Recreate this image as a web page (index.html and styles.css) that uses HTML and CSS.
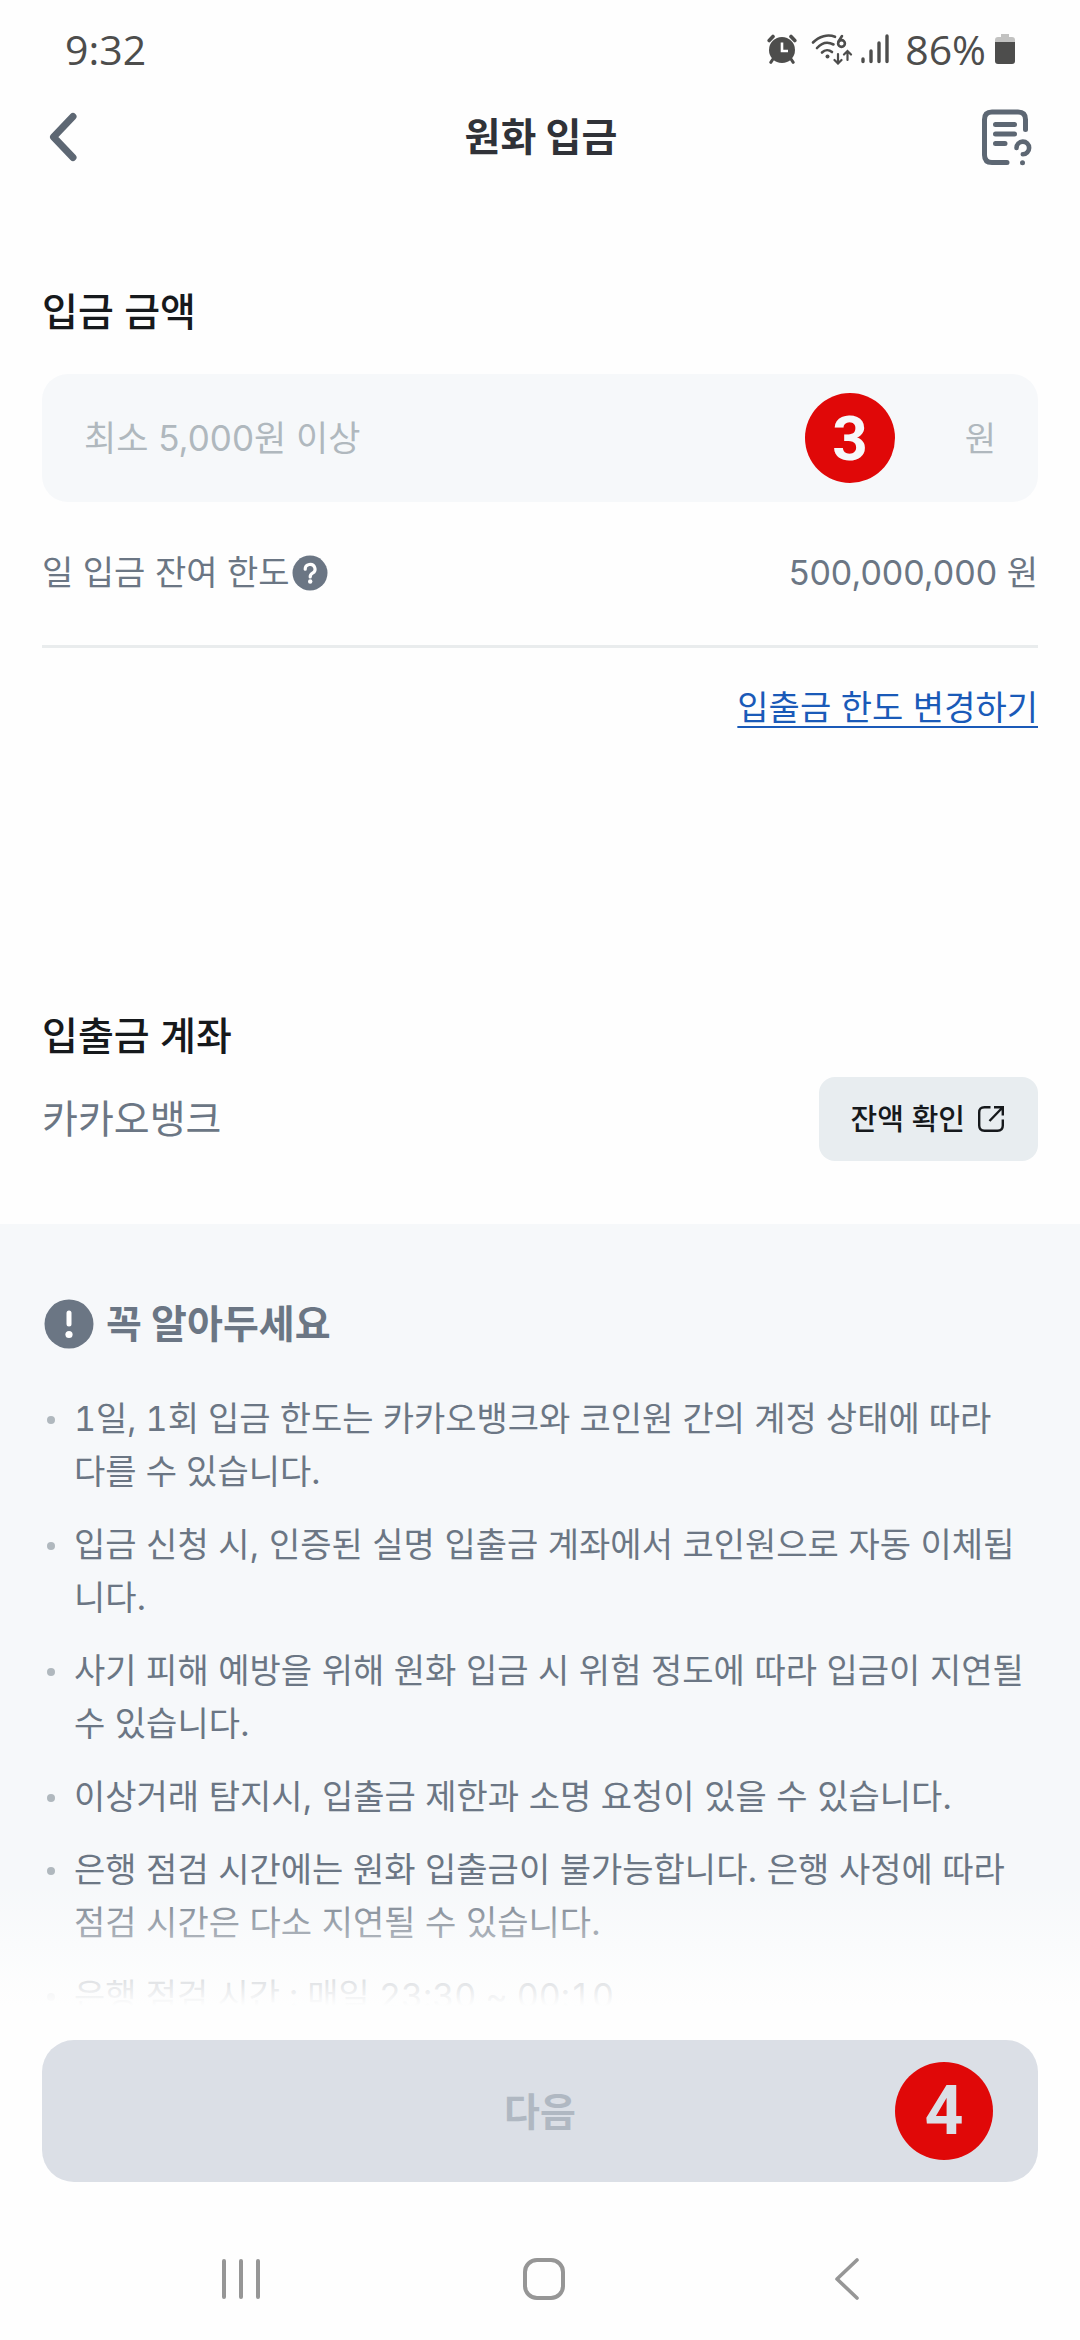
FILE: index.html
```html
<!DOCTYPE html>
<html lang="ko">
<head>
<meta charset="utf-8">
<meta name="viewport" content="width=device-width, initial-scale=1">
<title>원화 입금</title>
<link rel="stylesheet" href="styles.css">
</head>
<body class="app">
  <div class="status-bar">
    <span class="status-text">9:32</span>
    <div class="status-icons">
      <svg class="icon-alarm" width="30" height="30" viewBox="0 0 30 30" aria-hidden="true">
        <g stroke="#4d4d4c" stroke-linecap="round" fill="none">
          <path d="M2.200 6.500L6 2.500M27.800 6.500L24 2.500" stroke-width="3.600"/>
          <path d="M6 25L3.800 28.300M24 25L26.200 28.300" stroke-width="3"/>
        </g>
        <circle cx="15" cy="16" r="13" fill="#4d4d4c"/>
        <path d="M15 8.500V17H21" fill="none" stroke="#fff" stroke-width="2.600"/>
      </svg>
      <svg class="icon-wifi" width="42" height="32" viewBox="0 0 42 32" fill="none" stroke="#4d4d4c" stroke-width="2.600" stroke-linecap="round" aria-hidden="true">
        <path d="M2 9.500C8 3 17 1 24 3.800M6 15C11 9.500 17 8.500 22.500 11.500M11 19.500C14 16.500 18 16.500 21 19"/>
        <circle cx="16.500" cy="23.500" r="2" fill="#4d4d4c" stroke="none"/>
        <path d="M31 3L27.500 8.500"/>
        <circle cx="30.500" cy="10.500" r="3.400"/>
        <path d="M27 21V30M23.500 27L27 30.500L30.500 27M36.500 27V18.500M33 21.500L36.500 18L40 21.500" stroke-width="2.200"/>
      </svg>
      <svg class="icon-signal" width="28" height="30" viewBox="0 0 28 30" stroke="#4d4d4c" stroke-width="3.400" stroke-linecap="round" aria-hidden="true">
        <path d="M2 25V27.500M10 17V27.500M18 9V27.500M26 2V27.500"/>
      </svg>
      <span class="status-text">86%</span>
      <svg class="icon-battery" width="22" height="32" viewBox="0 0 22 32" aria-hidden="true">
        <path d="M7 1H15V4H18Q21 4 21 7V9H1V7Q1 4 4 4H7Z" fill="#c2c2c1"/>
        <path d="M1 9H21V28Q21 31 18 31H4Q1 31 1 28Z" fill="#4d4d4c"/>
      </svg>
    </div>
  </div>

  <header class="header">
    <button class="icon-button" type="button" aria-label="뒤로">
      <svg width="30" height="50" viewBox="0 0 30 50" fill="none" stroke="#5d6773" stroke-width="7" stroke-linecap="round" stroke-linejoin="round"><path d="M24 4.500L4.500 25L24 45.500"/></svg>
    </button>
    <h1 class="header-title">원화 입금</h1>
    <button class="icon-button" type="button" aria-label="입금 안내">
      <svg width="52" height="58" viewBox="0 0 52 58" fill="none" stroke="#5d6773" stroke-width="5" stroke-linecap="round" stroke-linejoin="round">
        <path d="M26 54.500H11Q3.500 54.500 3.500 47V11.500Q3.500 4 11 4H37Q44.500 4 44.500 11.500V21.500M14.500 16.500H33.500M14.500 26H33.500M14.500 35.500H24"/>
        <path d="M35.500 40A6.300 6.300 0 1 1 41.800 46.200" stroke-width="4.600"/>
        <circle cx="41.500" cy="54.700" r="2.500" fill="#5d6773" stroke="none"/>
      </svg>
    </button>
  </header>

  <div class="content">
    <main class="scroller">
      <section class="deposit">
        <h2 class="section-title"><label for="amount">입금 금액</label></h2>
        <div class="amount-field">
          <input class="amount-input" id="amount" type="text" inputmode="numeric" placeholder="최소 5,000원 이상">
          <span class="amount-unit">원</span>
          <span class="badge badge-amount">3</span>
        </div>
        <div class="limit-row">
          <span class="limit-label">일 입금 잔여 한도
            <button class="help-button" type="button" aria-label="한도 도움말">
              <svg width="36" height="36" viewBox="0 0 36 36"><circle cx="18" cy="18" r="17.500" fill="#6b7684"/><path d="M13.200 14.200A4.900 4.700 0 1 1 20.500 18.200Q18.200 19.500 18.200 22" fill="none" stroke="#fff" stroke-width="3.200" stroke-linecap="round"/><circle cx="18.200" cy="26.500" r="2.200" fill="#fff"/></svg>
            </button>
          </span>
          <span>500,000,000 원</span>
        </div>
        <a class="limit-link" href="#limit">입출금 한도 변경하기</a>
      </section>

      <section class="account">
        <h2 class="section-title">입출금 계좌</h2>
        <div class="account-row">
          <span class="bank-name">카카오뱅크</span>
          <button class="balance-button" type="button">잔액 확인
            <svg width="28" height="28" viewBox="0 0 28 28" fill="none" stroke="#16191c" stroke-width="2.400"><path d="M13.500 2.200H7.500Q2.200 2.200 2.200 7.500V20.500Q2.200 25.800 7.500 25.800H20.500Q25.800 25.800 25.800 20.500V14.500M17 2.200H25.800V10.500M25.500 2.500L12.500 16"/></svg>
          </button>
        </div>
      </section>

      <section class="notice">
        <h2 class="notice-title">
          <svg width="50" height="50" viewBox="0 0 50 50" aria-hidden="true"><circle cx="25" cy="25" r="24.500" fill="#6b7684"/><path d="M25 14V25" stroke="#fff" stroke-width="5" stroke-linecap="round"/><circle cx="25" cy="35.500" r="3.600" fill="#fff"/></svg>
          꼭 알아두세요
        </h2>
        <ul class="notice-list">
          <li class="tabular">1일, 1회 입금 한도는 카카오뱅크와 코인원 간의 계정 상태에 따라<br>다를 수 있습니다.</li>
          <li>입금 신청 시, 인증된 실명 입출금 계좌에서 코인원으로 자동 이체됩니다.</li>
          <li>사기 피해 예방을 위해 원화 입금 시 위험 정도에 따라 입금이 지연될 수 있습니다.</li>
          <li>이상거래 탐지시, 입출금 제한과 소명 요청이 있을 수 있습니다.</li>
          <li>은행 점검 시간에는 원화 입출금이 불가능합니다. 은행 사정에 따라 점검 시간은 다소 지연될 수 있습니다.</li>
          <li class="tabular">은행 점검 시간 : 매일 23:30 ~ 00:10</li>
        </ul>
      </section>
    </main>
    <div class="fade"></div>
  </div>

  <footer class="footer">
    <div class="next">
      <button class="next-button" type="button" disabled>다음</button>
      <span class="badge badge-next">4</span>
    </div>
    <nav class="system-nav">
      <button class="icon-button" type="button" aria-label="최근 앱"><svg width="40" height="42" viewBox="0 0 40 42" stroke="#969696" stroke-width="4" stroke-linecap="round"><path d="M3 3V39M20 3V39M37 3V39"/></svg></button>
      <button class="icon-button" type="button" aria-label="홈"><svg width="42" height="42" viewBox="0 0 42 42" fill="none" stroke="#969696" stroke-width="4"><rect x="2" y="2" width="38" height="38" rx="12"/></svg></button>
      <button class="icon-button" type="button" aria-label="뒤로 가기"><svg width="26" height="44" viewBox="0 0 26 44" fill="none" stroke="#969696" stroke-width="3.600" stroke-linecap="round" stroke-linejoin="round"><path d="M23 3L3 22L23 41"/></svg></button>
    </nav>
  </footer>
</body>
</html>
```
FILE: styles.css
```css
* {
  box-sizing: border-box;
}

.app {
  margin: 0;
  height: 100vh;
  display: flex;
  flex-direction: column;
  background: #fefefe;
  color: #6b7684;
  font-family: Inter, "Noto Sans CJK KR", sans-serif;
  font-size: 34px;
  line-height: 53px;
}

svg {
  display: block;
  flex: none;
}

button,
input {
  font: inherit;
  color: inherit;
  border: 0;
  padding: 0;
  background: none;
}

.status-bar {
  display: flex;
  align-items: center;
  justify-content: space-between;
  height: 98px;
  padding: 0 64px 0 65px;
  flex: none;
}

.status-text {
  font-family: "Open Sans", sans-serif;
  font-size: 41px;
  color: #4d4d4c;
}

.status-icons {
  display: flex;
  align-items: center;
}

.icon-wifi {
  margin-left: 14px;
}

.icon-signal {
  margin: 0 16px 0 8px;
}

.icon-battery {
  margin-left: 8px;
}

.header {
  display: grid;
  grid-template-columns: 1fr auto 1fr;
  align-items: center;
  height: 78px;
  padding: 0 47px 0 49px;
  flex: none;
}

.icon-button {
  display: flex;
  align-items: center;
  justify-content: center;
  justify-self: start;
}

.header .icon-button:last-child {
  justify-self: end;
}

.header-title,
.section-title,
.notice-title {
  margin: 0;
  font-size: 39px;
  line-height: 56px;
  font-weight: 700;
}

.header-title {
  color: #303238;
}

.content {
  position: relative;
  flex: 1;
  min-height: 0;
}

.scroller {
  height: 100%;
  overflow-y: auto;
  scrollbar-width: none;
}

.fade {
  position: absolute;
  left: 0;
  right: 0;
  bottom: 0;
  height: 124px;
  background: linear-gradient(rgba(254, 254, 254, 0), #fefefe);
  pointer-events: none;
}

.deposit {
  display: flex;
  flex-direction: column;
  padding: 108px 42px 0;
}

.section-title {
  font-weight: 500;
  color: #16191c;
}

.amount-field {
  position: relative;
  display: flex;
  align-items: center;
  height: 128px;
  margin-top: 34px;
  padding: 0 42px;
  border-radius: 26px;
  background: #f6f8fa;
}

.amount-input {
  flex: 1;
  min-width: 0;
  outline: 0;
  font-size: 35px;
}

.amount-input::placeholder,
.amount-unit {
  color: #b0b8be;
  opacity: 1;
}

.badge {
  position: absolute;
  top: 50%;
  transform: translateY(-50%);
  display: flex;
  align-items: center;
  justify-content: center;
  border-radius: 50%;
  background: #e00808;
  font-family: Roboto, sans-serif;
  font-weight: 700;
}

.badge-amount {
  right: 143px;
  width: 90px;
  height: 90px;
  font-size: 62px;
  color: #f6f8fa;
}

.badge-next {
  right: 45px;
  width: 98px;
  height: 98px;
  font-size: 68px;
  color: #dbdfe6;
}

.limit-row {
  display: flex;
  justify-content: space-between;
  margin-top: 44px;
  padding-bottom: 46px;
  border-bottom: 3px solid #e9eced;
}

.limit-label {
  display: flex;
  align-items: center;
  gap: 2px;
}

.limit-link {
  align-self: flex-end;
  margin-top: 33px;
  color: #1a5ab8;
  text-decoration-thickness: 2px;
  text-underline-offset: 6px;
}

.account {
  padding: 274px 42px 63px;
}

.account-row {
  display: flex;
  align-items: center;
  justify-content: space-between;
  margin-top: 13px;
}

.bank-name {
  font-size: 39px;
  line-height: 56px;
}

.balance-button {
  display: flex;
  align-items: center;
  gap: 12px;
  height: 84px;
  padding: 0 33px 0 32px;
  border-radius: 16px;
  background: #e8edf0;
  color: #16191c;
  font-size: 29px;
  font-weight: 500;
}

.notice {
  padding: 72px 42px 40px;
  background: #f6f8fa;
}

.notice-title {
  display: flex;
  align-items: center;
  gap: 12px;
  padding-left: 2px;
}

.notice-list {
  display: grid;
  gap: 20px;
  margin: 40px 0 0;
  padding: 0;
  list-style: none;
}

.notice-list li {
  position: relative;
  padding-left: 32px;
}

.tabular {
  font-variant-numeric: tabular-nums;
}

.notice-list li::before {
  content: "";
  position: absolute;
  left: 5px;
  top: 24px;
  width: 8px;
  height: 8px;
  border-radius: 50%;
  background: #b0b8be;
}

.footer {
  flex: none;
  padding-top: 34px;
}

.next {
  position: relative;
  margin: 0 42px 36px;
}

.next-button {
  width: 100%;
  height: 142px;
  border-radius: 32px;
  background: #dbdfe6;
  color: #b0b8c2;
  font-size: 39px;
  font-weight: 700;
}

.system-nav {
  display: grid;
  grid-template-columns: repeat(3, 1fr);
  height: 122px;
  padding: 0 82px 0 90px;
}

.system-nav .icon-button {
  justify-self: stretch;
}
```
